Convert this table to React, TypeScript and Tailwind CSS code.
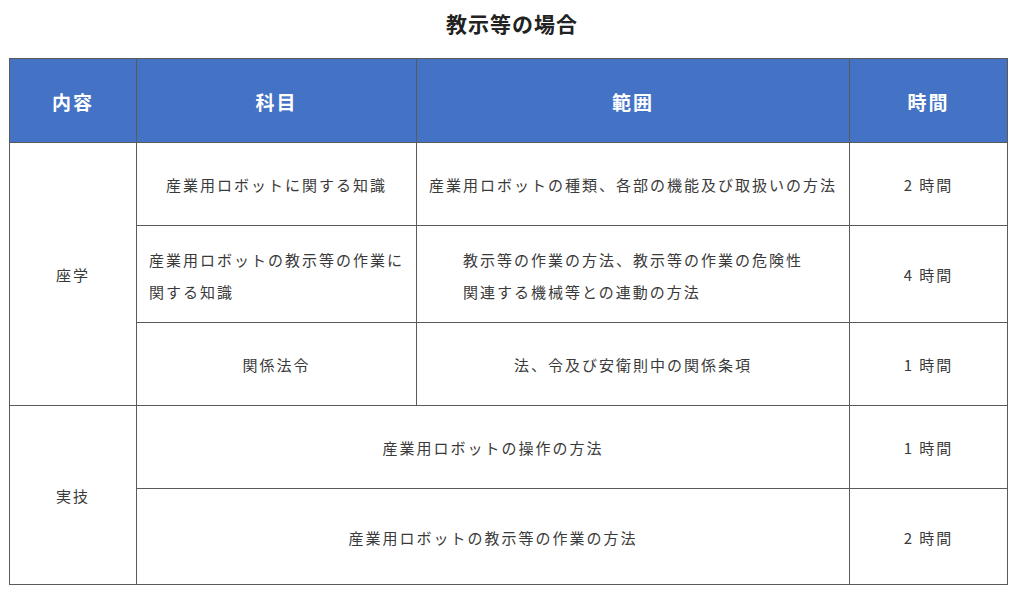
export default function App() {
  const cell = "border border-[#5a5a5a] text-center align-middle pt-[3px]";
  return (
    <div
      className="w-[1024px] h-[591px] bg-white text-[#3a3a3a]"
      style={{ fontFamily: '"Noto Sans CJK JP", "Noto Sans", sans-serif' }}
    >
      {/* title */}
      <div className="h-[47px] flex items-center justify-center text-[21px] font-bold tracking-[1px] text-[#222]">
        教示等の場合
      </div>

      <table className="ml-[9px] mt-[11px] w-[998px] border-collapse table-fixed text-[15px] tracking-[2px]">
        <colgroup>
          <col className="w-[127px]" />
          <col className="w-[280px]" />
          <col className="w-[433px]" />
          <col className="w-[158px]" />
        </colgroup>
        <thead>
          <tr className="h-[84px] bg-[#4472c4] text-white text-[19px] font-bold">
            <th className={cell}>内容</th>
            <th className={cell}>科目</th>
            <th className={cell}>範囲</th>
            <th className={cell}>時間</th>
          </tr>
        </thead>
        <tbody>
          <tr className="h-[83px]">
            <td className={cell} rowSpan={3}>座学</td>
            <td className={cell}>産業用ロボットに関する知識</td>
            <td className={cell}>産業用ロボットの種類、各部の機能及び取扱いの方法</td>
            <td className={cell}>2 時間</td>
          </tr>
          <tr className="h-[97px]">
            <td className={cell}>
              <div className="inline-block text-left leading-[32px]">
                産業用ロボットの教示等の作業に
                <br />
                関する知識
              </div>
            </td>
            <td className={cell}>
              <div className="inline-block text-left leading-[32px]">
                教示等の作業の方法、教示等の作業の危険性
                <br />
                関連する機械等との連動の方法
              </div>
            </td>
            <td className={cell}>4 時間</td>
          </tr>
          <tr className="h-[83px]">
            <td className={cell}>関係法令</td>
            <td className={cell}>法、令及び安衛則中の関係条項</td>
            <td className={cell}>1 時間</td>
          </tr>
          <tr className="h-[83px]">
            <td className={cell} rowSpan={2}>実技</td>
            <td className={cell} colSpan={2}>産業用ロボットの操作の方法</td>
            <td className={cell}>1 時間</td>
          </tr>
          <tr className="h-[96px]">
            <td className={cell} colSpan={2}>産業用ロボットの教示等の作業の方法</td>
            <td className={cell}>2 時間</td>
          </tr>
        </tbody>
      </table>
    </div>
  );
}
